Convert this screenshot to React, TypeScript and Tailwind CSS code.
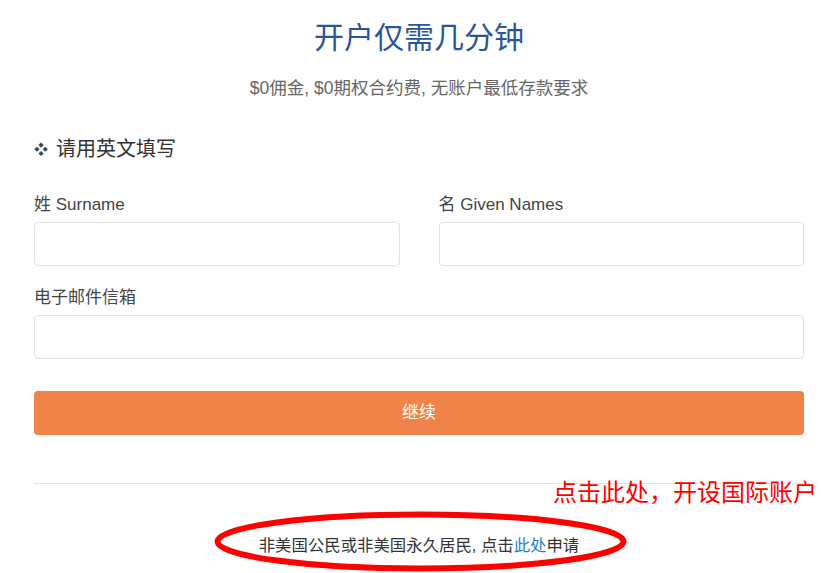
const FONT = 'font-["Liberation_Sans","Noto_Sans_CJK_SC",sans-serif]'

function Field({ label }: { label: string }) {
  return (
    <div className="flex flex-col gap-[5px]">
      <label className="text-[17px] leading-[24px] text-[#444]">{label}</label>
      <input className="h-[44px] w-full rounded-[4px] border border-[#e2e2e2] bg-white px-3 outline-none" />
    </div>
  )
}

export default function App() {
  return (
    <div className={`relative h-[573px] w-full overflow-hidden bg-white ${FONT}`}>
      <div className="flex flex-col pl-[34px] pr-[17px] pt-[19px]">
        {/* heading */}
        <h1 className="text-center text-[30px] leading-[38px] text-[#2b5694]">开户仅需几分钟</h1>
        <p className="mt-[19px] text-center text-[17.5px] leading-[24px] text-[#666]">
          $0佣金, $0期权合约费, 无账户最低存款要求
        </p>

        <h2 className="mt-[35px] flex items-center text-[20px] leading-[28px] text-[#333]">
          <span className="mr-[8px] text-[14px] text-[#444]">❖</span>请用英文填写
        </h2>

        {/* form */}
        <div className="mt-[30px] grid grid-cols-2 gap-x-[39px]">
          <Field label="姓 Surname" />
          <Field label="名 Given Names" />
        </div>
        <div className="mt-[20px]">
          <Field label="电子邮件信箱" />
        </div>

        <button className="mt-[32px] h-[44px] w-full rounded-[4px] bg-[#f0834a] text-[17px] text-white">
          继续
        </button>

        <hr className="mt-[48px] border-t border-[#e5e5e5]" />

        <p className="mt-[50px] text-center text-[16.4px] leading-[22px] text-[#333]">
          非美国公民或非美国永久居民, 点击<a className="text-[#1f7ae0]">此处</a>申请
        </p>
      </div>

      {/* annotation overlay */}
      <div className="absolute left-[553px] top-[479px] whitespace-nowrap text-[24px] leading-[28px] text-[#ff0000]">
        点击此处，开设国际账户
      </div>
      <svg className="absolute left-[213px] top-[510px]" width="415" height="63" viewBox="0 0 415 63">
        <ellipse cx="207.5" cy="31.5" rx="203" ry="27" fill="none" stroke="#ff0000" strokeWidth="6" />
      </svg>
    </div>
  )
}
